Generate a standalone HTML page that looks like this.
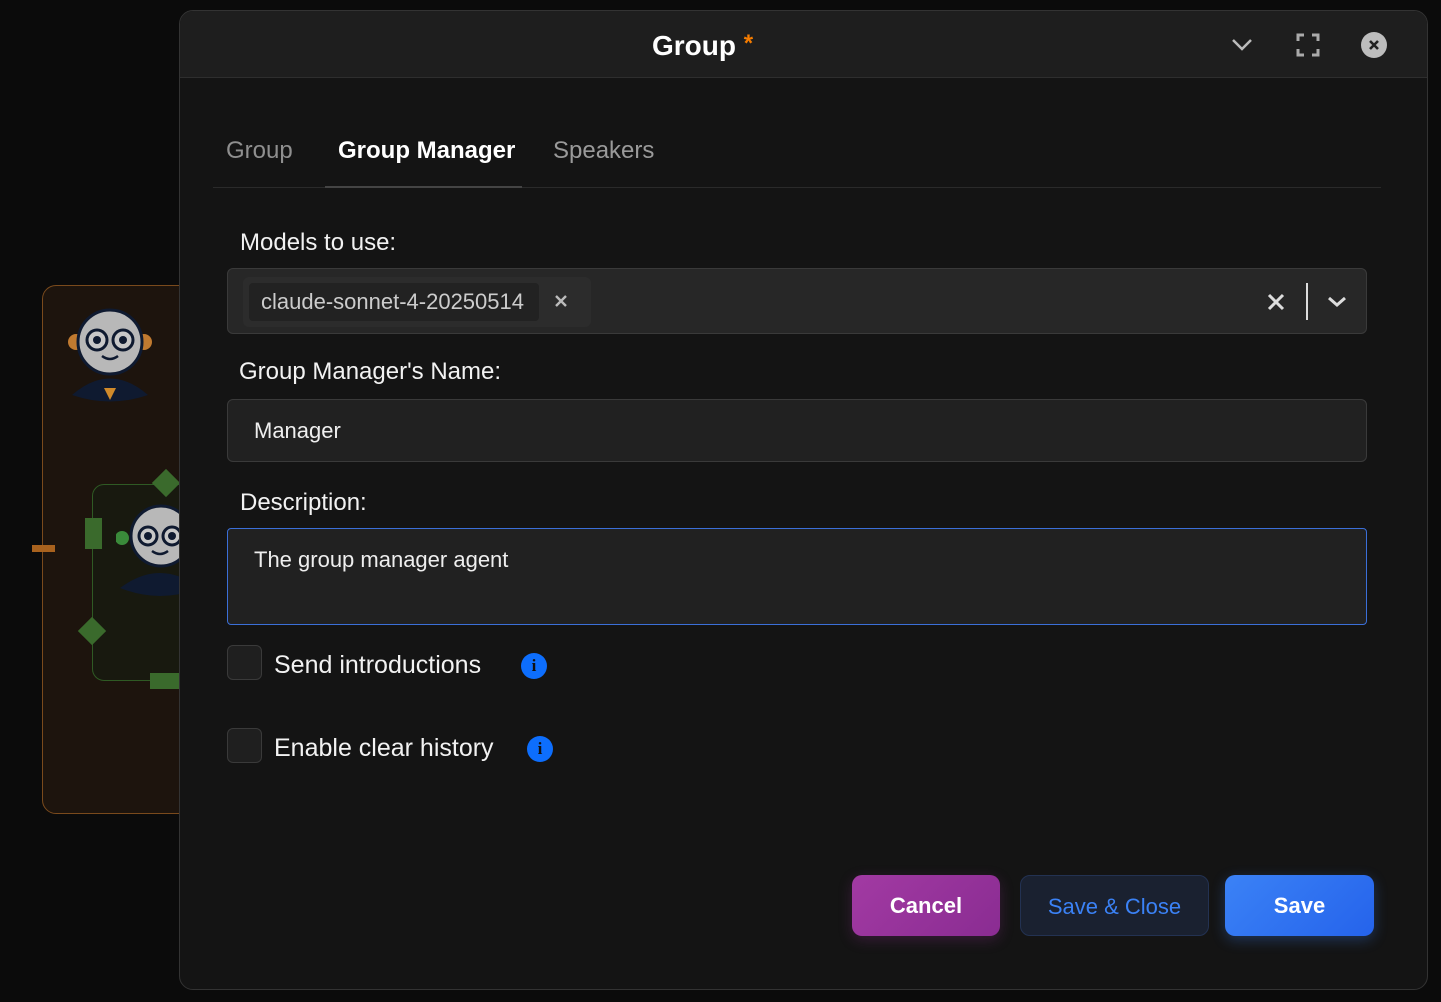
<!DOCTYPE html>
<html><head><meta charset="utf-8"><style>
*{box-sizing:border-box;margin:0;padding:0}
body{width:1441px;height:1002px;background:#0b0b0b;font-family:"Liberation Sans","DejaVu Sans",sans-serif;position:relative;overflow:hidden}
.abs{position:absolute}
.modal{left:179px;top:10px;width:1249px;height:980px;background:#141414;border:1px solid #333;border-radius:14px;overflow:hidden}
.hdr{left:0;top:0;width:100%;height:67px;background:#1e1e1e;border-bottom:1px solid #2e2e2e}
.lbl{color:#f2f2f2;font-size:24px}
.field{background:#212121;border:1px solid #3a3a3a;border-radius:6px}
.cb{width:35px;height:35px;border:1px solid #3a3a3a;border-radius:6px;background:#1f1f1f}
.info{width:26px;height:26px;border-radius:50%;background:#0d6efd;color:#111;font-weight:bold;font-size:17px;text-align:center;line-height:26px;font-family:"Liberation Serif",serif}
.btn{height:61px;border-radius:10px;font-size:22px;font-weight:bold;text-align:center;line-height:61px}
</style></head><body>
<div class="abs" style="left:42px;top:285px;width:200px;height:529px;background:#1d140d;border:1px solid #7a4a1c;border-radius:14px"></div>
<div class="abs" style="left:32px;top:545px;width:23px;height:7px;background:#a8621e"></div>
<svg class="abs" style="left:64px;top:300px" width="92" height="106"><path d="M8 95 Q46 62 84 95 Q46 108 8 95Z" fill="#0f1a30"/><path d="M40 88 L46 100 L52 88Z" fill="#d08a2a"/><circle cx="12" cy="42" r="8" fill="#c07a30"/><circle cx="80" cy="42" r="8" fill="#c07a30"/><circle cx="46" cy="42" r="32" fill="#b8b8b8" stroke="#0f1a30" stroke-width="3"/><circle cx="33" cy="40" r="10" fill="#c8c8c8" stroke="#0f1a30" stroke-width="3"/><circle cx="59" cy="40" r="10" fill="#c8c8c8" stroke="#0f1a30" stroke-width="3"/><circle cx="33" cy="40" r="4" fill="#0f1a30"/><circle cx="59" cy="40" r="4" fill="#0f1a30"/><path d="M38 56 Q46 62 54 56" fill="none" stroke="#0f1a30" stroke-width="2.5"/></svg>
<div class="abs" style="left:92px;top:484px;width:120px;height:197px;background:#18190f;border:1px solid #2f5a24;border-radius:12px"></div>
<div class="abs" style="left:85px;top:518px;width:17px;height:31px;background:#3a6a2c"></div>
<div class="abs" style="left:82px;top:621px;width:20px;height:20px;background:#3a6a2c;transform:rotate(45deg)"></div>
<div class="abs" style="left:156px;top:473px;width:20px;height:20px;background:#3a6a2c;transform:rotate(45deg)"></div>
<div class="abs" style="left:150px;top:673px;width:40px;height:16px;background:#3a6a2c"></div>
<svg class="abs" style="left:116px;top:496px" width="80" height="108"><path d="M4 92 Q44 62 84 92 Q44 108 4 92Z" fill="#0f1a30"/><circle cx="6" cy="42" r="7" fill="#3a8a3a"/><circle cx="45" cy="40" r="30" fill="#b8b8b8" stroke="#0f1a30" stroke-width="3"/><circle cx="32" cy="40" r="9" fill="#c8c8c8" stroke="#0f1a30" stroke-width="3"/><circle cx="56" cy="40" r="9" fill="#c8c8c8" stroke="#0f1a30" stroke-width="3"/><circle cx="32" cy="40" r="4" fill="#0f1a30"/><circle cx="56" cy="40" r="4" fill="#0f1a30"/><path d="M36 55 Q44 61 52 55" fill="none" stroke="#0f1a30" stroke-width="2.5"/></svg>

<div class="abs modal">
 <div class="abs hdr">
  <div class="abs" style="left:472px;top:19px;font-size:28px;font-weight:bold;color:#fff;white-space:nowrap">Group <span style="color:#f57c00;font-size:24px;vertical-align:top">*</span></div>
  <svg class="abs" style="left:1050px;top:26px" width="24" height="16"><path d="M3 3 L12 12 L21 3" fill="none" stroke="#bbb" stroke-width="2.5"/></svg>
  <svg class="abs" style="left:1116px;top:22px" width="24" height="24"><path d="M2 8V2H8M16 2H22V8M22 16V22H16M8 22H2V16" fill="none" stroke="#aaa" stroke-width="3"/></svg>
  <div class="abs" style="left:1181px;top:21px;width:26px;height:26px;border-radius:50%;background:#bdbdbd"></div>
  <svg class="abs" style="left:1187px;top:27px" width="14" height="14"><path d="M3 3L11 11M11 3L3 11" stroke="#222" stroke-width="2.6"/></svg>
 </div>
 <div class="abs" style="left:46px;top:126px;font-size:24px;color:#8f8f8f">Group</div>
 <div class="abs" style="left:158px;top:126px;font-size:24px;font-weight:bold;color:#fff">Group Manager</div>
 <div class="abs" style="left:373px;top:126px;font-size:24px;color:#9a9a9a">Speakers</div>
 <div class="abs" style="left:33px;top:176px;width:1168px;height:1px;background:#2a2a2a"></div>
 <div class="abs" style="left:145px;top:175px;width:197px;height:2px;background:#444"></div>

 <div class="abs lbl" style="left:60px;top:218px">Models to use:</div>
 <div class="abs field" style="left:47px;top:257px;width:1140px;height:66px;background:#272727">
  <div class="abs" style="left:15px;top:8px;width:348px;height:50px;background:#2c2c2c;border-radius:6px"></div>
  <div class="abs" style="left:21px;top:14px;width:290px;height:38px;background:#222;border-radius:4px"></div>
  <div class="abs" style="left:33px;top:20px;font-size:22px;color:#ccc">claude-sonnet-4-20250514</div>
  <svg class="abs" style="left:327px;top:26px" width="12" height="12"><path d="M1 1L11 11M11 1L1 11" stroke="#bbb" stroke-width="2.4"/></svg>
  <svg class="abs" style="left:1039px;top:24px" width="18" height="18"><path d="M2 2L16 16M16 2L2 16" stroke="#ddd" stroke-width="3"/></svg>
  <div class="abs" style="left:1078px;top:14px;width:2px;height:37px;background:#ddd"></div>
  <svg class="abs" style="left:1098px;top:26px" width="22" height="14"><path d="M3 3L11 10L19 3" fill="none" stroke="#ddd" stroke-width="3"/></svg>
 </div>

 <div class="abs lbl" style="left:59px;top:347px">Group Manager's Name:</div>
 <div class="abs field" style="left:47px;top:388px;width:1140px;height:63px"><div class="abs" style="left:26px;top:18px;font-size:22px;color:#eee">Manager</div></div>

 <div class="abs lbl" style="left:60px;top:478px">Description:</div>
 <div class="abs field" style="left:47px;top:517px;width:1140px;height:97px;border-color:#3b6fd8;border-radius:4px"><div class="abs" style="left:26px;top:18px;font-size:22px;color:#eee">The group manager agent</div></div>

 <div class="abs cb" style="left:47px;top:634px"></div>
 <div class="abs lbl" style="left:94px;top:640px;font-size:25px">Send introductions</div>
 <div class="abs info" style="left:341px;top:642px">i</div>
 <div class="abs cb" style="left:47px;top:717px"></div>
 <div class="abs lbl" style="left:94px;top:723px;font-size:25px">Enable clear history</div>
 <div class="abs info" style="left:347px;top:725px">i</div>

 <div class="abs btn" style="left:672px;top:864px;width:148px;background:linear-gradient(135deg,#a23aa3,#8a2c92);color:#fff;box-shadow:0 4px 14px rgba(160,50,160,.25)">Cancel</div>
 <div class="abs btn" style="left:840px;top:864px;width:189px;background:#1a2130;border:1px solid #233252;color:#3b82f6;font-weight:normal">Save &amp; Close</div>
 <div class="abs btn" style="left:1045px;top:864px;width:149px;background:linear-gradient(135deg,#3b82f6,#2563eb);color:#fff;box-shadow:0 4px 14px rgba(59,130,246,.3)">Save</div>
</div>
</body></html>
